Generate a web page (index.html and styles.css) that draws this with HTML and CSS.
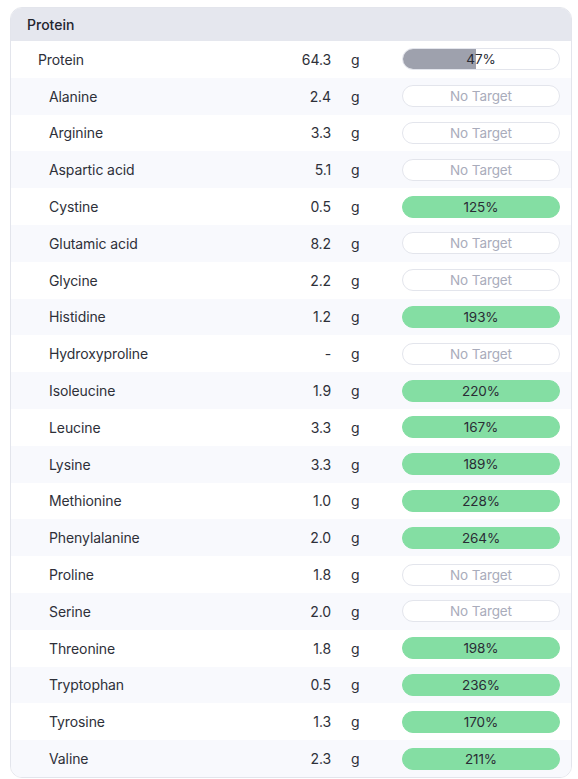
FILE: index.html
```html
<!DOCTYPE html>
<html>
<head>
<meta charset="utf-8">
<link rel="stylesheet" href="styles.css">
</head>
<body>
<div class="card">
  <div class="card-head">Protein</div>
  <div class="rows">
    <div class="row top"><span class="name">Protein</span><span class="val">64.3</span><span class="unit">g</span><div class="bar"><div class="fill grey" style="width:47%"></div><span class="pct">47%</span></div></div>
    <div class="row"><span class="name">Alanine</span><span class="val">2.4</span><span class="unit">g</span><div class="bar"><span class="pct none">No Target</span></div></div>
    <div class="row"><span class="name">Arginine</span><span class="val">3.3</span><span class="unit">g</span><div class="bar"><span class="pct none">No Target</span></div></div>
    <div class="row"><span class="name">Aspartic acid</span><span class="val">5.1</span><span class="unit">g</span><div class="bar"><span class="pct none">No Target</span></div></div>
    <div class="row"><span class="name">Cystine</span><span class="val">0.5</span><span class="unit">g</span><div class="bar full"><span class="pct">125%</span></div></div>
    <div class="row"><span class="name">Glutamic acid</span><span class="val">8.2</span><span class="unit">g</span><div class="bar"><span class="pct none">No Target</span></div></div>
    <div class="row"><span class="name">Glycine</span><span class="val">2.2</span><span class="unit">g</span><div class="bar"><span class="pct none">No Target</span></div></div>
    <div class="row"><span class="name">Histidine</span><span class="val">1.2</span><span class="unit">g</span><div class="bar full"><span class="pct">193%</span></div></div>
    <div class="row"><span class="name">Hydroxyproline</span><span class="val">-</span><span class="unit">g</span><div class="bar"><span class="pct none">No Target</span></div></div>
    <div class="row"><span class="name">Isoleucine</span><span class="val">1.9</span><span class="unit">g</span><div class="bar full"><span class="pct">220%</span></div></div>
    <div class="row"><span class="name">Leucine</span><span class="val">3.3</span><span class="unit">g</span><div class="bar full"><span class="pct">167%</span></div></div>
    <div class="row"><span class="name">Lysine</span><span class="val">3.3</span><span class="unit">g</span><div class="bar full"><span class="pct">189%</span></div></div>
    <div class="row"><span class="name">Methionine</span><span class="val">1.0</span><span class="unit">g</span><div class="bar full"><span class="pct">228%</span></div></div>
    <div class="row"><span class="name">Phenylalanine</span><span class="val">2.0</span><span class="unit">g</span><div class="bar full"><span class="pct">264%</span></div></div>
    <div class="row"><span class="name">Proline</span><span class="val">1.8</span><span class="unit">g</span><div class="bar"><span class="pct none">No Target</span></div></div>
    <div class="row"><span class="name">Serine</span><span class="val">2.0</span><span class="unit">g</span><div class="bar"><span class="pct none">No Target</span></div></div>
    <div class="row"><span class="name">Threonine</span><span class="val">1.8</span><span class="unit">g</span><div class="bar full"><span class="pct">198%</span></div></div>
    <div class="row"><span class="name">Tryptophan</span><span class="val">0.5</span><span class="unit">g</span><div class="bar full"><span class="pct">236%</span></div></div>
    <div class="row"><span class="name">Tyrosine</span><span class="val">1.3</span><span class="unit">g</span><div class="bar full"><span class="pct">170%</span></div></div>
    <div class="row"><span class="name">Valine</span><span class="val">2.3</span><span class="unit">g</span><div class="bar full"><span class="pct">211%</span></div></div>
  </div>
</div>
</body>
</html>
```
FILE: styles.css
```css
* { box-sizing: border-box; }
body {
  margin: 0;
  background: #ffffff;
  font-family: Inter, "Noto Sans", sans-serif;
  color: #2e3039;
}
.card {
  margin: 7px 6px 0 10px;
  border: 1px solid #e3e5ec;
  border-radius: 12px;
  overflow: hidden;
}
.card-head {
  height: 33px;
  background: #e5e7ee;
  padding: 0 16px;
  display: flex;
  align-items: center;
  font-size: 14px;
  font-weight: 500;
  color: #23252e;
}
.row {
  height: 36.8px;
  display: grid;
  grid-template-columns: 1fr 60px 71px 158px;
  align-items: center;
  padding: 0 11px 0 38px;
  font-size: 14px;
  letter-spacing: -0.1px;
}
.row:nth-child(even) { background: #f8f9fd; }
.row.top { padding-left: 27px; }
.val { text-align: right; }
.unit { padding-left: 20px; }
.bar {
  position: relative;
  height: 22px;
  border: 1px solid #e3e5ec;
  border-radius: 11px;
  background: #ffffff;
  overflow: hidden;
  display: flex;
  align-items: center;
  justify-content: center;
}
.bar.full { background: #84dea3; border-color: #84dea3; }
.fill {
  position: absolute;
  left: 0; top: 0; bottom: 0;
}
.fill.grey { background: #9ea1ad; }
.pct {
  position: relative;
  font-size: 13.5px;
  color: #2a2c35;
}
.pct.none { color: #a9acbb; }
```
